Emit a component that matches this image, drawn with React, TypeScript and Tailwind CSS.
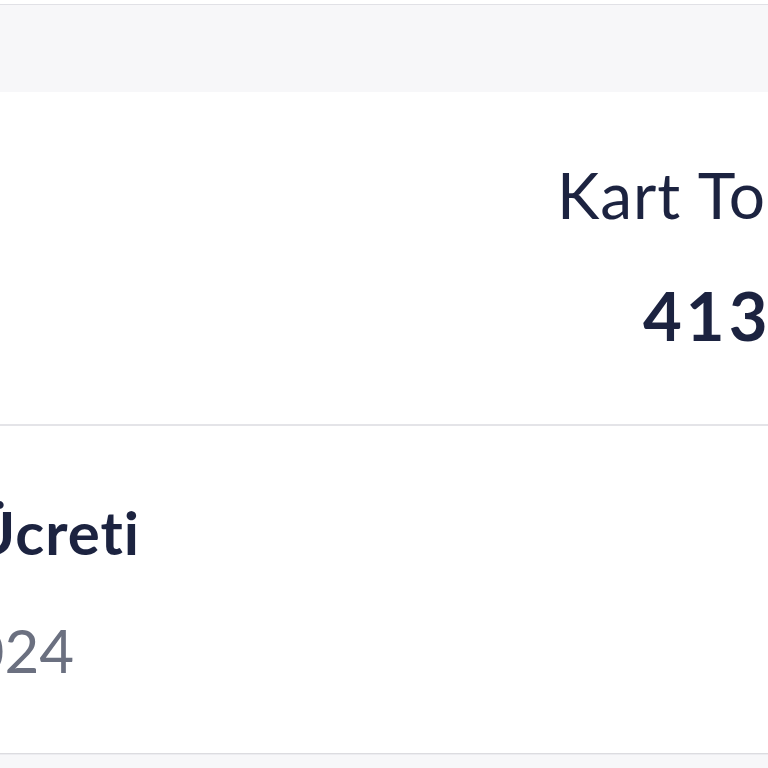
import React from "react";

export default function App() {
  return (
    <div
      className="w-[768px] h-[768px] overflow-hidden bg-white flex flex-col"
      style={{ fontFamily: "Lato, 'Noto Sans', sans-serif" }}
    >
      <div className="h-[4px] bg-white shrink-0" />
      <div className="h-[88px] shrink-0 bg-[#f7f7f9] border-t border-[#e1e1e6]" />
      <div className="h-[334px] shrink-0 bg-white border-b-2 border-[#e4e4e8] flex flex-col">
        <div className="pt-[71px] pl-[557px] whitespace-nowrap text-[64px] leading-none text-[#1c2340] tracking-[1px] [word-spacing:1px]">
          Kart Toplamı
        </div>
        <div className="pt-[55px] pl-[643px] whitespace-nowrap text-[67px] leading-none font-bold text-[#1c2340] tracking-[4px]">
          413 TL
        </div>
      </div>
      <div className="h-[328px] shrink-0 bg-white border-b border-[#dcdce0] flex flex-col">
        <div className="pt-[76px] w-[140px] flex justify-end overflow-hidden">
          <span className="whitespace-nowrap text-[60px] leading-none font-bold text-[#1c2340] tracking-[1px]">
            Yıllık Kart Ücreti
          </span>
        </div>
        <div className="pt-[58px] w-[74px] flex justify-end overflow-hidden">
          <span className="whitespace-nowrap text-[60px] leading-none text-[#6b7080]">
            12.01.2024
          </span>
        </div>
      </div>
      <div className="flex-1 bg-[#f7f7f9] border-t border-[#ececf0]" />
    </div>
  );
}
